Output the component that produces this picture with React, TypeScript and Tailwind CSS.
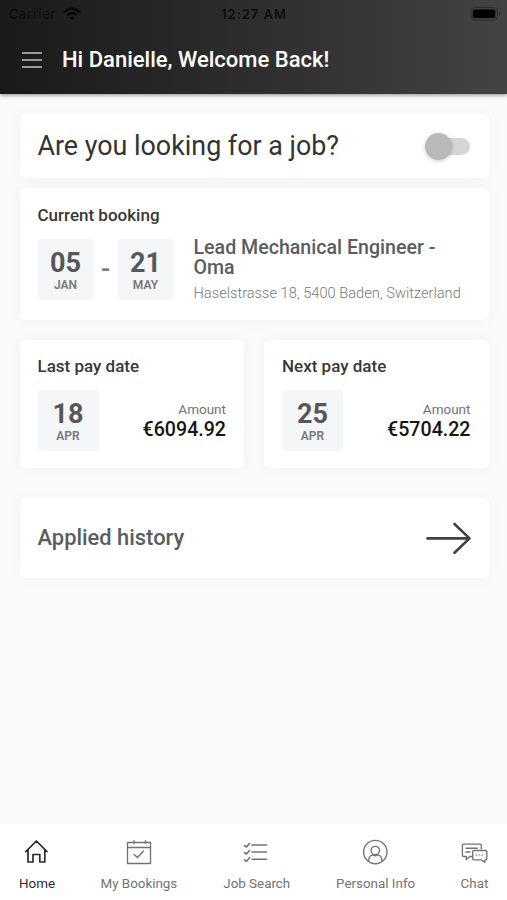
import React from "react";

function StatusBar() {
  return (
    <div className="grid h-7 grid-cols-3 items-center pl-[9px] pr-[6px] font-['Inter','Liberation_Sans',sans-serif] text-[13px] text-black/75">
      <div className="flex items-center gap-[7px] text-black/60">
        <span className="pt-px tracking-[0.6px]">Carrier</span>
        <svg width="18" height="14" viewBox="0 0 18 14" fill="none" stroke="#080808" strokeWidth="2.5">
          <path d="M1 5.1C5.6.7 12.4.7 17 5.1M4 8.2c2.9-2.7 7.1-2.7 10 0" />
          <path d="M6.4 10.6c1.5-1.3 3.7-1.3 5.2 0L9 13.2z" fill="#080808" stroke="none" />
        </svg>
      </div>
      <span className="-ml-[2px] pt-px text-center font-semibold tracking-[0.95px]">12:27 AM</span>
      <div className="flex justify-end">
        <svg width="31" height="14" viewBox="0 0 31 14">
          <rect x="1" y=".5" width="26.5" height="12.5" rx="3.5" fill="none" stroke="#2e2e2e" />
          <rect x="2.8" y="2.5" width="22.5" height="8.5" rx="1.5" fill="#000" />
          <path d="M29 4.5c1.7.8 1.7 3.8 0 4.6z" fill="#2e2e2e" />
        </svg>
      </div>
    </div>
  );
}

function Header() {
  return (
    <header className="relative h-[94px] bg-linear-to-r from-[#1a1a1a] to-[#434343] shadow-[0_1px_4px_rgba(0,0,0,0.45)]">
      <StatusBar />
      <div className="flex h-[63px] items-center gap-[20px] pl-[22px]">
        <div className="flex w-5 flex-col gap-[5px]">
          <span className="h-[2px] bg-[#999]" />
          <span className="h-[2px] bg-[#999]" />
          <span className="h-[2px] bg-[#999]" />
        </div>
        <h1 className="text-[22px] font-medium text-white">Hi Danielle, Welcome Back!</h1>
      </div>
    </header>
  );
}

function Card({ className, children }: { className: string; children: React.ReactNode }) {
  return <section className={"rounded-[5px] bg-white shadow-[0_0_16px_rgba(0,0,0,0.035)] " + className}>{children}</section>;
}

function DateBox({ day, month, wide }: { day: string; month: string; wide?: boolean }) {
  return (
    <div className={"flex h-[61px] flex-col items-center rounded-[4px] bg-[#f5f6f7] pt-[10px] " + (wide ? "w-[61px]" : "w-[56px]")}>
      <span className="text-[27px] leading-[29px] font-bold text-[#55585b]">{day}</span>
      <span className="text-[12px] leading-[15px] font-semibold text-[#77797c]">{month}</span>
    </div>
  );
}

function PayCard({ title, day, amount }: { title: string; day: string; amount: string }) {
  return (
    <Card className="h-[128px] px-[18px] pt-[16px]">
      <h2 className="text-[17px] leading-5 font-medium text-[#383838]">{title}</h2>
      <div className="mt-[14px] flex justify-between">
        <DateBox day={day} month="APR" wide />
        <div className="pt-[11px] text-right">
          <div className="text-[13.5px] leading-[17px] text-[#717375]">Amount</div>
          <div className="text-[19.6px] leading-[23px] font-medium text-[#151515]">{amount}</div>
        </div>
      </div>
    </Card>
  );
}

function NavItem({ label, width, active, children }: { label: string; width: string; active?: boolean; children: React.ReactNode }) {
  return (
    <div className={"flex flex-col items-center " + width + (active ? " text-[#2b2b2b]" : " text-[#707376]")}>
      <svg width="28" height="28" viewBox="0 0 28 28" fill="none" stroke="currentColor" strokeWidth="1.35" strokeLinejoin="round" strokeLinecap="round">
        {children}
      </svg>
      <span className="mt-[9px] text-[13.4px] leading-[18px] whitespace-nowrap">{label}</span>
    </div>
  );
}

export default function App() {
  return (
    <div className="flex h-[900px] w-[507px] flex-col overflow-hidden bg-[#fafafa] font-['Roboto','Liberation_Sans',sans-serif]">
      <Header />
      <main className="flex flex-1 flex-col pt-[20px] pr-[18.5px] pl-[19.5px]">
        <Card className="flex h-[64px] items-center justify-between px-[18px]">
          <span className="text-[26.85px] text-[#333]">Are you looking for a job?</span>
          <div className="mt-px mr-px flex h-[17px] w-[42px] items-center rounded-full bg-[#d6d6d6]">
            <span className="-ml-[3px] size-[27px] shrink-0 rounded-full bg-[#b9b9b9] shadow-[0_1px_4px_rgba(0,0,0,0.2)]" />
          </div>
        </Card>
        <Card className="mt-[10px] h-[132px] px-[18px] pt-[17px]">
          <h2 className="text-[17px] leading-5 font-medium text-[#383838]">Current booking</h2>
          <div className="mt-[14px] flex">
            <DateBox day="05" month="JAN" />
            <span className="w-6 pt-[13px] text-center text-[27px] leading-[34px] font-medium text-[#77797c]">-</span>
            <DateBox day="21" month="MAY" />
            <div className="-mt-px ml-[20px]">
              <h3 className="w-[260px] text-[19.6px] leading-5 font-medium text-[#5a5d60]">Lead Mechanical Engineer - Oma</h3>
              <p className="mt-[6px] text-[14.65px] leading-[18px] font-light whitespace-nowrap text-[#77797c]">Haselstrasse 18, 5400 Baden, Switzerland</p>
            </div>
          </div>
        </Card>
        <div className="mt-[20px] grid grid-cols-2 gap-[20px]">
          <PayCard title="Last pay date" day="18" amount="€6094.92" />
          <PayCard title="Next pay date" day="25" amount="€5704.22" />
        </div>
        <Card className="mt-[30px] flex h-[80px] items-center justify-between px-[18px]">
          <span className="text-[21.9px] font-medium text-[#5a5d60]">Applied history</span>
          <svg width="45" height="32" viewBox="0 0 45 32" fill="none" stroke="#414141" strokeWidth="2.6" strokeLinecap="round" strokeLinejoin="round">
            <path d="M1.5 16.4H43.5M28.500 2l15 14.400-15 14.300" />
          </svg>
        </Card>
      </main>
      <nav className="flex h-[76px] justify-between bg-white pt-[14px] pr-[18.5px] pl-[19px]">
        <NavItem label="Home" width="w-[36px]" active>
          <path d="M5 12.5 2.8 13.6 13.4 3l10.600 10.600-2.200-1.100M5 12.500v11.500h5v-7.500h6.800v7.500h5V12.500" strokeWidth="1.7" />
        </NavItem>
        <NavItem label="My Bookings" width="w-[78px]">
          <path d="M2.500 4.500h23v21h-23zM2.500 9.500h23M9 2.700v2.600M20.500 2.700v2.600M9 16.500l3.500 3 6-6.500" />
        </NavItem>
        <NavItem label="Job Search" width="w-[68px]">
          <path d="M9 7h14.500M9 14h14.500M9 21.300h14.500M1.500 7.500l2 1.500 3-3.500M1.500 14.500l2 1.500 3-3.500M1.500 21.800l2 1.500 3-3.500" strokeWidth="1.6" />
        </NavItem>
        <NavItem label="Personal Info" width="w-[80px]">
          <g transform="translate(-.7 0)">
            <circle cx="14" cy="14" r="11.7" />
            <circle cx="14" cy="12.500" r="4.200" />
            <path d="M7.500 23v-1c0-3 2-4.800 4-5.200 1 1.200 4 1.200 5 0 2 .4 4 2.200 4 5.200v1" />
          </g>
        </NavItem>
        <NavItem label="Chat" width="w-[28px]">
          <path d="M11.500 18.500H8.800l-3.500 3v-3H2.600a1.200 1.200 0 0 1-1.200-1.200V7.300a1.200 1.200 0 0 1 1.200-1.200h16.500a1.200 1.200 0 0 1 1.200 1.200v3.600M5 10.200h11.500M5 14h4" />
          <path d="M12.900 12.500h11.700a1.200 1.200 0 0 1 1.200 1.200v7a1.200 1.200 0 0 1-1.200 1.200h-.8v2.600l-3.200-2.600h-7.700a1.200 1.200 0 0 1-1.200-1.200v-7a1.200 1.200 0 0 1 1.200-1.200" />
          <path d="M15 17h8" strokeDasharray="1 2" strokeWidth="1" />
        </NavItem>
      </nav>
    </div>
  );
}
